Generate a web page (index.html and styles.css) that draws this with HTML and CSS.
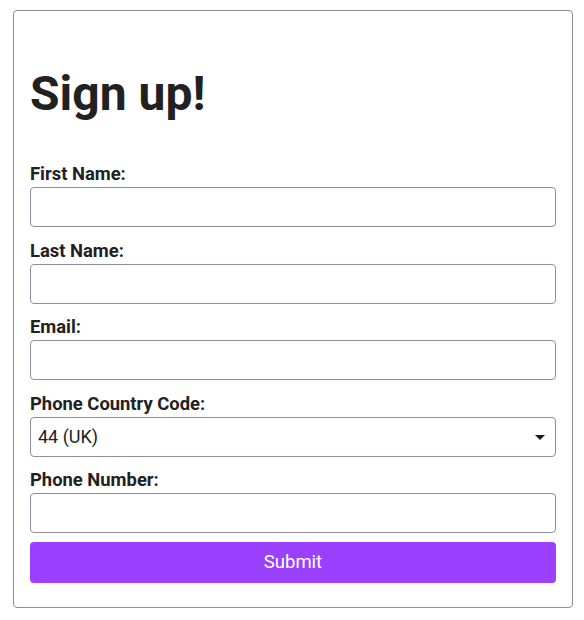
FILE: index.html
```html
<!DOCTYPE html>
<html lang="en">
<head>
<meta charset="utf-8">
<title>Sign up!</title>
<link rel="stylesheet" href="styles.css">
</head>
<body>
<div class="card">
  <h1 class="title">Sign up!</h1>
  <form class="form">
    <div class="field">
      <label class="label" for="first">First Name:</label>
      <input class="input" id="first" type="text">
    </div>
    <div class="field">
      <label class="label" for="last">Last Name:</label>
      <input class="input" id="last" type="text">
    </div>
    <div class="field">
      <label class="label" for="email">Email:</label>
      <input class="input" id="email" type="email">
    </div>
    <div class="field">
      <label class="label" for="cc">Phone Country Code:</label>
      <div class="select-wrap">
        <select class="input select" id="cc">
          <option>44 (UK)</option>
        </select>
      </div>
    </div>
    <div class="field last">
      <label class="label" for="phone">Phone Number:</label>
      <input class="input" id="phone" type="tel">
    </div>
    <button class="submit" type="button">Submit</button>
  </form>
</div>
</body>
</html>
```

FILE: styles.css
```css
body {
  margin: 8px;
  background: #ffffff;
  font-family: Roboto, "Liberation Sans", sans-serif;
  color: #212121;
}

.card {
  box-sizing: border-box;
  width: 560px;
  margin: 2px 0 0 5px;
  padding: 16px;
  border: 1px solid #8c8ca3;
  border-radius: 4px;
}

.title {
  margin: 38px 0 41px;
  font-size: 48px;
  font-weight: 700;
  line-height: normal;
  color: #212121;
}

.form {
  margin: 0;
}

.field {
  margin-bottom: 12.6px;
}

.field.last {
  margin-bottom: 0;
}

.label {
  display: block;
  font-size: 18.4px;
  font-weight: 700;
  line-height: 21px;
  margin-bottom: 3px;
  color: #212121;
}

.input {
  display: block;
  box-sizing: border-box;
  width: 100%;
  height: 40px;
  margin: 0;
  padding: 0 8px;
  border: 1px solid #8c8ca3;
  border-radius: 4px;
  background: #ffffff;
  font-family: Roboto, "Liberation Sans", sans-serif;
  font-size: 18px;
  color: #212121;
}

.select-wrap {
  position: relative;
}

.select {
  appearance: none;
  -webkit-appearance: none;
  padding-left: 7px;
}

.select-wrap::after {
  content: "";
  position: absolute;
  right: 11px;
  top: 18px;
  width: 0;
  height: 0;
  border-left: 5px solid transparent;
  border-right: 5px solid transparent;
  border-top: 5px solid #1a1a1a;
  pointer-events: none;
}

.submit {
  display: block;
  box-sizing: border-box;
  width: 100%;
  height: 41px;
  margin: 8.5px 0 8px;
  border: none;
  border-radius: 4px;
  background: #9b40ff;
  color: #ffffff;
  font-family: Roboto, "Liberation Sans", sans-serif;
  font-size: 18.5px;
  font-weight: 400;
}
```
